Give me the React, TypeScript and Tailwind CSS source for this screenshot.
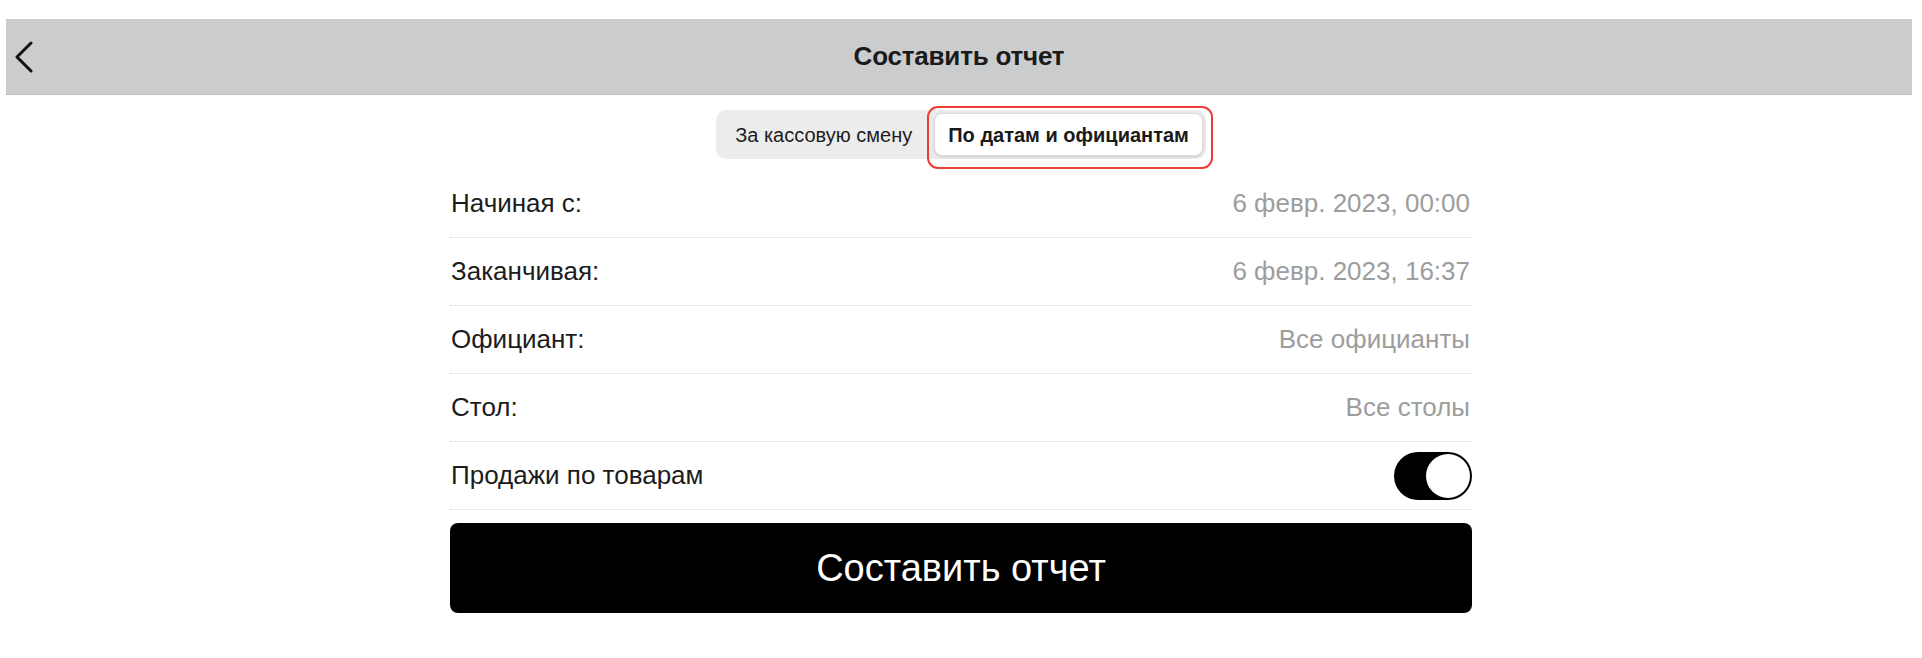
import { useState } from 'react';

type Row = { label: string; value: string };

const rows: Row[] = [
  { label: 'Начиная с:', value: '6 февр. 2023, 00:00' },
  { label: 'Заканчивая:', value: '6 февр. 2023, 16:37' },
  { label: 'Официант:', value: 'Все официанты' },
  { label: 'Стол:', value: 'Все столы' },
];

export default function App() {
  const [byItems, setByItems] = useState(true);

  return (
    <div className="min-h-[658px] bg-white pt-[19px] font-['Liberation_Sans',Arial,sans-serif] text-[#111]">
      <header className="ml-[6px] mr-[10px] grid h-[76px] grid-cols-[1fr_auto_1fr] items-center border-b border-[#bdbdbd] bg-[#cbcccd]">
        <button className="flex h-full w-[40px] items-center justify-start pl-[8px]">
          <svg width="20" height="32" viewBox="0 0 20 32" fill="none">
            <path d="M17 2 L3 16 L17 30" stroke="#111" strokeWidth="3" strokeLinecap="round" strokeLinejoin="round" />
          </svg>
        </button>
        <h1 className="text-[26px] font-bold tracking-[-0.2px] text-[#1a1a1a]">Составить отчет</h1>
        <div />
      </header>

      <div className="mt-[15px] flex justify-center">
        <div className="flex h-[49px] items-center rounded-[10px] bg-[#ececec] p-[3px]">
          <button className="flex h-full items-center pl-[16px] pr-[19px] text-[20px] text-[#1c1c1c]">
            За кассовую смену
          </button>
          <div className="relative ml-[3px] h-full">
            <button className="flex h-[43px] items-center rounded-[8px] border border-[#dedede] bg-white px-[13px] text-[20px] font-bold text-[#1a1a1a] shadow-[0_1px_3px_rgba(0,0,0,0.15)]">
              По датам и официантам
            </button>
            <span className="pointer-events-none absolute -top-[7px] -bottom-[13px] -left-[7px] -right-[10px] rounded-[11px] border-[2.5px] border-[#ec3d36]" />
          </div>
        </div>
      </div>

      <div className="mx-auto mt-[11px] w-[1022px]">
        {rows.map((r) => (
          <div
            key={r.label}
            className="flex h-[68px] items-center justify-between border-b border-dotted border-[#d6d6d6] pl-[1px] pr-[2px] text-[26px]"
          >
            <span className="text-[#1c1c1c]">{r.label}</span>
            <span className="text-[#9d9d9d]">{r.value}</span>
          </div>
        ))}
        <div className="flex h-[68px] items-center justify-between border-b border-dotted border-[#d6d6d6] pl-[1px] text-[26px]">
          <span className="text-[#1c1c1c]">Продажи по товарам</span>
          <button
            onClick={() => setByItems(!byItems)}
            className={`flex h-[48px] w-[78px] items-center rounded-full p-[2px] ${
              byItems ? 'justify-end bg-black' : 'justify-start bg-[#e5e5e5]'
            }`}
          >
            <span className="h-[44px] w-[44px] rounded-full bg-white" />
          </button>
        </div>

        <button className="mt-[13px] flex h-[90px] w-full items-center justify-center rounded-[8px] bg-black text-[38px] text-white">
          Составить отчет
        </button>
      </div>
    </div>
  );
}
